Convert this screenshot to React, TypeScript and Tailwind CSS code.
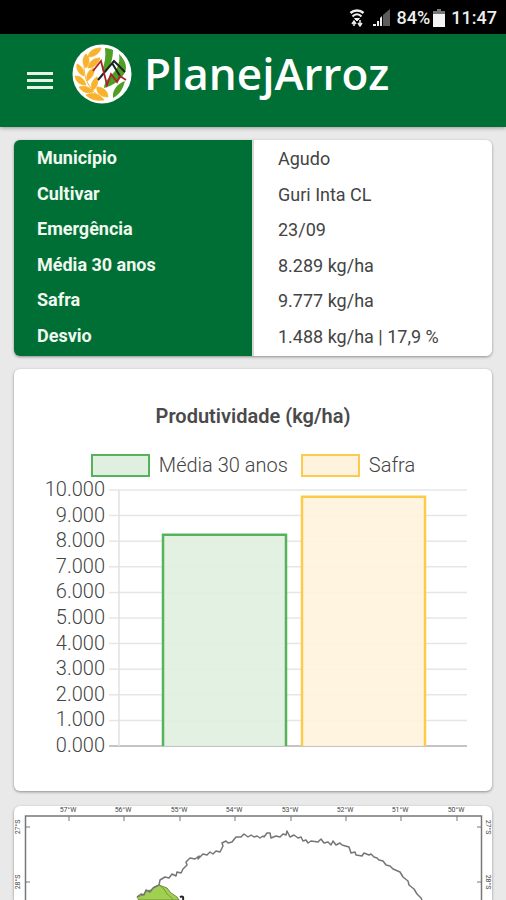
import React from "react";

const details = [
  { label: "Município", value: "Agudo" },
  { label: "Cultivar", value: "Guri Inta CL" },
  { label: "Emergência", value: "23/09" },
  { label: "Média 30 anos", value: "8.289 kg/ha" },
  { label: "Safra", value: "9.777 kg/ha" },
  { label: "Desvio", value: "1.488 kg/ha | 17,9 %" },
];

const series = [
  { name: "Média 30 anos", value: 8289, x: 149, stroke: "#56b35c", fill: "#dff0e0", swatch: "border-[#56b35c] bg-[#dff0e0]" },
  { name: "Safra", value: 9777, x: 288, stroke: "#fccb4c", fill: "#fff3dd", swatch: "border-[#fccb4c] bg-[#fff3dd]" },
];

const ticks = [10, 9, 8, 7, 6, 5, 4, 3, 2, 1, 0];
const PLOT_TOP = 13;
const PLOT_HEIGHT = 256;
const yOf = (v: number) => PLOT_TOP + PLOT_HEIGHT * (1 - v / 10000);

function StatusBar() {
  return (
    <div className="flex h-[34px] items-center justify-end bg-black pr-[9px] pt-[2px] text-[18px] leading-6 text-[#eeeeee]">
      <svg className="mr-2 h-5 w-4" viewBox="0 0 16 20" fill="none" stroke="#eee" aria-hidden="true">
        <path d="M1.500 5C5 1.500 11 1.500 14.500 5" strokeWidth="2.500" />
        <path d="M3.500 8.500C6 5.500 10 5.500 12.500 8.500" strokeWidth="2" />
        <path d="M5.500 10.500h5L8 13z" fill="#eee" strokeWidth="1" />
        <path d="M5 13v5M3 16l2-3 2 3M11 12v5M9 15l2 3 2-3" strokeWidth="1.500" />
      </svg>
      <svg className="mr-[6px] h-[18px] w-[18px]" viewBox="0 0 18 18" aria-hidden="true">
        <path d="M0 15h3v2H0zM4 12h2v5H4z" fill="#eee" />
        <path d="M7 9l2-2v10H7z" fill="#eee" />
        <path d="M10 6l7-6v17h-7z" fill="#5c5c5c" />
      </svg>
      <span className="font-medium">84%</span>
      <svg className="ml-[3px] mr-[6px] h-[18px] w-3" viewBox="0 0 12 18" aria-hidden="true">
        <path d="M4 0h4v2h4v3H0V2h4z" fill="#777" />
        <path d="M0 5h12v13H0z" fill="#f4f4f4" />
      </svg>
      <span className="font-medium">11:47</span>
    </div>
  );
}

function Logo() {
  return (
    <svg className="h-[60px] w-[60px] shrink-0" viewBox="0 0 60 60" aria-hidden="true">
      <circle cx="30" cy="30" r="29.500" fill="#fff" />
      <g fill="#f8b22d" stroke="#f8b22d" strokeWidth="0.8">
        <path d="M29 4C22 4 17 7 16 13c6 0 11-3 13-9z" />
        <path d="M14 10c-4 4-4 10 0 14 4-5 4-10 0-14z" />
        <path d="M28 14c-7 0-11 4-12 10 6 0 10-4 12-10z" />
        <path d="M5 20c-1 6 2 10 7 12 0-6-2-10-7-12z" />
        <path d="M22 24c-6 2-8 7-7 13 5-3 8-8 7-13z" />
        <path d="M3 32c1 6 5 9 11 9-2-6-5-9-11-9z" />
        <path d="M25 33c-5 3-7 8-5 14 5-3 7-9 5-14z" />
        <path d="M7 43c3 5 8 7 14 5-3-5-8-7-14-5z" />
        <path d="M14 51c5 5 12 6 18 5-4-6-11-8-18-5z" />
        <path d="M25 43c-1 6 4 10 11 10 0-6-5-10-11-10z" />
      </g>
      <path d="M14 12C9 28 14 43 28 53" fill="none" stroke="#f8b22d" strokeWidth="1" />
      <g fill="#4f9f24">
        <path d="M33 4c3 0 6 1 8 2 0 8-2 15-7 22l-4-2c3-7 4-14 3-22z" />
        <path d="M47 10c7 7 9 14 5 20-4 6-11 12-20 14 0-8 9-13 13-20 2-5 3-9 2-14z" />
        <path d="M53 37c-2 8-5 13-12 17-1-8 4-14 12-17z" />
      </g>
      <path d="M26 36L42 17l11 11M40 19l8 13" fill="none" stroke="#1d2423" strokeWidth="2" />
      <path d="M21 27l8-10 6 24 4-11 6 8 3-6 6 4" fill="none" stroke="#a8232b" strokeWidth="1.800" />
    </svg>
  );
}

function Header() {
  return (
    <header className="relative flex h-[93px] items-start bg-[#006f35] pl-[27px] pt-[10px] shadow-[0_1px_4px_rgba(0,0,0,0.35)]">
      <button type="button" aria-label="Menu" className="mr-[19px] mt-7 flex w-[26px] flex-col gap-1">
        <span className="h-[3px] w-full bg-[#e8f2e4]" />
        <span className="h-[3px] w-full bg-[#e8f2e4]" />
        <span className="h-[3px] w-full bg-[#e8f2e4]" />
      </button>
      <Logo />
      <h1 className="ml-3 font-['Open_Sans',sans-serif] text-[44px] font-semibold leading-[58px] text-white">PlanejArroz</h1>
    </header>
  );
}

function Details() {
  return (
    <dl className="grid h-[216px] grid-cols-2 grid-rows-[repeat(5,minmax(0,1fr))_38px] gap-x-[2px] overflow-hidden rounded-md bg-[#d5d8d3] text-[18px] leading-5 shadow-[0_1px_3px_rgba(0,0,0,0.4)]">
      {details.map((d) => (
        <React.Fragment key={d.label}>
          <dt className="bg-[#006f35] pl-[23px] pt-2 font-bold text-[#f1f8f0]">{d.label}</dt>
          <dd className="bg-white pl-6 pt-[9px] text-[#444444]">{d.value}</dd>
        </React.Fragment>
      ))}
    </dl>
  );
}

function ProductivityChart() {
  return (
    <section className="h-[422px] rounded-md bg-white pt-[35px] shadow-[0_1px_3px_rgba(0,0,0,0.4)]">
      <h2 className="text-center text-[20px] font-semibold leading-6 text-[#4a4a4a]">Produtividade (kg/ha)</h2>
      <ul className="mt-[26px] flex justify-center gap-[13px] text-[20px] font-light leading-[22px] text-[#444444]">
        {series.map((s) => (
          <li key={s.name} className="flex gap-[9px]">
            <span className={`h-[23px] w-[59px] border-2 ${s.swatch}`} />
            {s.name}
          </li>
        ))}
      </ul>
      <svg className="block w-full" viewBox="0 0 478 300" role="img" aria-label="Produtividade (kg/ha)">
        {ticks.map((t) => (
          <g key={t}>
            <line x1="95" x2="453" y1={yOf(t * 1000)} y2={yOf(t * 1000)} stroke={t ? "#e6e6e6" : "#c4c4c4"} strokeWidth={t ? 1.5 : 2} />
            <text x="91" y={yOf(t * 1000) + 6} textAnchor="end" fontSize="20" fontWeight="300" fill="#444">{t}.000</text>
          </g>
        ))}
        <line x1="105" x2="105" y1={PLOT_TOP} y2={PLOT_TOP + PLOT_HEIGHT} stroke="#e0e0e0" strokeWidth="1.500" />
        {series.map((s) => {
          const top = yOf(s.value) + 1;
          const base = yOf(0);
          return (
            <g key={s.name}>
              <rect x={s.x} y={top} width="123" height={base - top} fill={s.fill} fillOpacity="0.92" />
              <path d={`M${s.x} ${base}V${top}h123V${base}`} fill="none" stroke={s.stroke} strokeWidth="2.500" />
            </g>
          );
        })}
      </svg>
    </section>
  );
}

function RegionMap() {
  return (
    <section className="overflow-hidden rounded-t-md bg-white shadow-[0_1px_3px_rgba(0,0,0,0.4)]">
      <svg className="block w-full" viewBox="0 0 478 94" role="img" aria-label="Mapa da região">
        <path d="M11.500 94V10h456v84" fill="none" stroke="#777" strokeWidth="1.500" />
        <g fontSize="7" fill="#444" textAnchor="middle">
          {[57, 56, 55, 54, 53, 52, 51, 50].map((d, i) => {
            const x = 55 + Math.round(i * 55.4);
            return (
              <g key={d}>
                <path d={`M${x} 10v5`} stroke="#777" />
                <text x={x - 1} y="6">{d}°W</text>
              </g>
            );
          })}
          {[27, 28].map((d, i) => {
            const y = 21 + i * 55;
            return (
              <g key={d}>
                <path d={`M12 ${y}h4M463 ${y}h5`} stroke="#777" />
                <text transform={`translate(6 ${y}) rotate(-90)`}>{d}°S</text>
                <text transform={`translate(472 ${y}) rotate(90)`}>{d}°S</text>
              </g>
            );
          })}
        </g>
        <path d="M123 91l6-2 3-4 5-1 3-3 5-2 8 3 4 5 6 4 2 3H125z" fill="#a0d050" stroke="#79883f" />
        <path d="M145 79l5 4 3 5 6 5" fill="none" stroke="#759e3c" />
        <path
          d="M123 91L127 88 130 89 132 84 136 86 139 82 145 79 146 74 151 71 155 72 158 68 162 70 163 66 167 67 169 63 173 59 172 56 176 52 181 53 185 50 184 53 189 48 193 49 196 46 199 48 202 45 206 46 209 40 208 37 212 35 214 37 218 36 222 31 227 31 230 28 234 31 237 29 240 31 243 30 246 32 249 30 250 31 253 27 256 27 257 32 262 30 266 31 269 28 272 29 273 25 276 31 280 29 284 32 287 31 289 35 292 34 294 37 297 35 304 36 307 33 310 37 314 36 317 39 319 35 322 39 326 37 328 39 335 41 337 47 341 46 342 49 348 50 350 47 355 49 357 48 360 51 363 52 365 54 369 55 372 59 376 60 379 63 386 66 389 71 394 75 395 79 400 83 403 88 407 92 408 94"
          fill="none"
          stroke="#757575"
          strokeWidth="1.500"
          strokeLinejoin="round"
        />
        <path d="M166 91q4-2 3 3" fill="none" stroke="#222" strokeWidth="2" />
      </svg>
    </section>
  );
}

export default function App() {
  return (
    <div className="min-h-screen bg-[#e9e9e9] font-[Roboto,sans-serif]">
      <StatusBar />
      <Header />
      <main className="flex flex-col px-[14px] pt-[13px]">
        <Details />
        <div className="mt-[13px]">
          <ProductivityChart />
        </div>
        <div className="mt-[15px]">
          <RegionMap />
        </div>
      </main>
    </div>
  );
}
